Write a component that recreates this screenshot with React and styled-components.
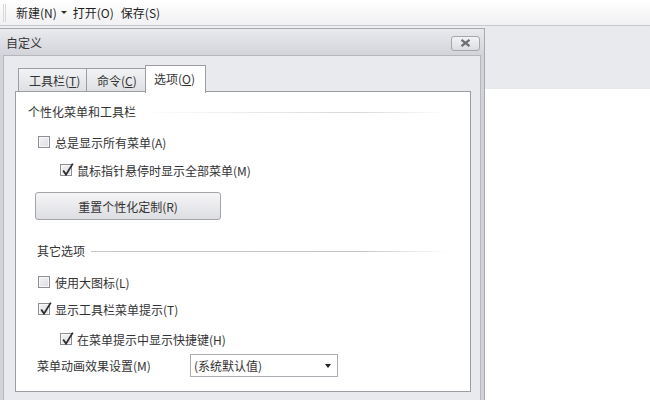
import styled, { createGlobalStyle } from 'styled-components'

const GlobalStyle = createGlobalStyle`
  html, body { margin: 0; padding: 0; background: #fff; }
  body {
    font-family: "Noto Sans CJK SC", "Microsoft YaHei", sans-serif;
    font-size: 12px;
    color: #2b2b2b;
    width: 650px;
    height: 400px;
    overflow: hidden;
  }
`

const Toolbar = styled.div`
  height: 26px;
  box-sizing: border-box;
  display: flex;
  align-items: center;
  padding-left: 3px;
  background: linear-gradient(#ffffff, #f1f1f3);
  border-bottom: 1px solid #c6c7cc;
`

const Grip = styled.div`
  width: 3px;
  height: 18px;
  border-left: 1px solid #d6d7db;
  border-right: 1px solid #d6d7db;
  box-sizing: border-box;
  margin-right: 10px;
`

const ToolItem = styled.span`
  display: inline-flex;
  align-items: center;
  margin-right: ${p => p.$gap || 6}px;
  color: #1f1f1f;
  line-height: 16px;
`

const DropArrow = styled.span`
  width: 0;
  height: 0;
  margin-left: 4px;
  border-left: 3px solid transparent;
  border-right: 3px solid transparent;
  border-top: 3px solid #333;
`

const Workspace = styled.div`
  display: flex;
  height: 374px;
`

const DialogColumn = styled.div`
  background: #eceef1;
  padding-top: 2px;
`

const Dialog = styled.div`
  width: 486px;
  height: 372px;
  box-sizing: border-box;
  margin-left: -1px;
  border: 1px solid #a8a9ae;
  border-bottom: none;
  background: #d2d3d8;
  display: flex;
  flex-direction: column;
`

const TitleBar = styled.div`
  height: 26px;
  flex: none;
  display: flex;
  align-items: center;
  justify-content: space-between;
  padding: 0 4px 0 6px;
  background: linear-gradient(#e9eaee, #d3d4d9);
  color: #353535;
`

const CloseButton = styled.div`
  width: 29px;
  height: 15px;
  box-sizing: border-box;
  border: 1px solid #a5a6ab;
  border-radius: 3px;
  background: linear-gradient(#f3f3f5, #dcdde1);
  display: flex;
  align-items: center;
  justify-content: center;
  margin-top: 2px;
`

const InnerFrame = styled.div`
  flex: 1;
  margin: 0 3px;
  border: 1px solid #b6b7bc;
  border-bottom: none;
  background: #e9eaee;
  padding: 9px 10px 0 11px;
  display: flex;
  flex-direction: column;
`

const TabStrip = styled.div`
  display: flex;
  align-items: flex-end;
  padding-left: 3px;
  height: 27px;
  position: relative;
  z-index: 1;
`

const Tab = styled.div`
  box-sizing: border-box;
  width: ${p => p.$w}px;
  height: ${p => (p.$active ? 28 : 24)}px;
  margin-left: ${p => (p.$first ? 0 : -1)}px;
  border: 1px solid #9c9da2;
  border-bottom: ${p => (p.$active ? 'none' : '1px solid #9c9da2')};
  background: ${p => (p.$active ? '#fff' : 'linear-gradient(#f2f3f5, #dfe0e4)')};
  display: flex;
  align-items: center;
  padding-left: ${p => (p.$active ? 8 : 10)}px;
  padding-bottom: ${p => (p.$active ? 3 : 0)}px;
  color: #333;
  margin-bottom: ${p => (p.$active ? -1 : 0)}px;

  u { text-decoration: underline; text-underline-offset: 1px; }
`

const Panel = styled.div`
  width: 456px;
  height: 301px;
  box-sizing: border-box;
  margin-top: -1px;
  border: 1px solid #9c9da2;
  background: #fff;
  padding: 11px 0 0 12px;
  display: flex;
  flex-direction: column;
`

const GroupHeader = styled.div`
  display: flex;
  align-items: center;
  gap: 6px;
  height: 16px;
  padding-left: ${p => p.$indent || 0}px;
  padding-right: 22px;
  margin-top: ${p => p.$top || 0}px;
  color: #333;

  &::after {
    content: '';
    flex: 1;
    height: 1px;
    margin-top: 2px;
    background: ${p => p.$faint
      ? 'linear-gradient(to right, rgba(200,200,200,0), #d8d8d8 70%, rgba(220,220,220,0))'
      : 'linear-gradient(to right, #c8c8c8, #c4c4c4 75%, rgba(220,220,220,0))'};
  }
`

const CheckRow = styled.label`
  display: flex;
  align-items: center;
  gap: 5px;
  height: 16px;
  margin-top: ${p => p.$top}px;
  padding-left: ${p => p.$indent}px;
  color: #333;
`

const Box = styled.span`
  position: relative;
  width: 12px;
  height: 12px;
  box-sizing: border-box;
  border: 1px solid #8d8e93;
  background: linear-gradient(135deg, #f4f4f6, #dcdde2);
  box-shadow: inset 0 0 0 1px #f8f8f9;
  flex: none;

  svg {
    position: absolute;
    left: 0;
    top: -3px;
  }
`

const ResetButton = styled.div`
  width: 186px;
  height: 28px;
  box-sizing: border-box;
  margin: 14px 0 0 7px;
  border: 1px solid #a3a4a9;
  border-radius: 3px;
  background: linear-gradient(#f5f5f7, #dddee2);
  display: flex;
  align-items: center;
  justify-content: center;
  color: #333;
`

const SelectRow = styled.div`
  display: flex;
  align-items: center;
  margin-top: 7px;
  padding-left: 9px;
  color: #333;
`

const SelectLabel = styled.span`
  width: 153px;
`

const Select = styled.div`
  width: 148px;
  height: 23px;
  box-sizing: border-box;
  border: 1px solid #abadb3;
  background: #fff;
  display: flex;
  align-items: center;
  justify-content: space-between;
  padding: 0 6px 0 3px;
`

const SelectArrow = styled.span`
  width: 0;
  height: 0;
  border-left: 3px solid transparent;
  border-right: 3px solid transparent;
  border-top: 4px solid #222;
`

const Filler = styled.div`
  flex: 1;
  display: flex;
  flex-direction: column;
  background: #fff;
`

const GrayBand = styled.div`
  height: 63px;
  background: #e9eaee;
`

const CloseIcon = () => (
  <svg width="11" height="8" viewBox="0 0 11 8">
    <path d="M1.5 0.8 L9.5 7.2 M9.5 0.8 L1.5 7.2" stroke="#6d6e73" strokeWidth="2.2" strokeLinecap="butt" />
  </svg>
)

const Check = ({ checked }) => (
  <Box>
    {checked && (
      <svg width="14" height="15" viewBox="0 0 14 15">
        <path d="M2.2 8.6 L5 12.6 L11.8 1.6" fill="none" stroke="#2d2d2d" strokeWidth="1.8" strokeLinejoin="miter" />
      </svg>
    )}
  </Box>
)

const Option = ({ checked, indent, top, children }) => (
  <CheckRow $indent={indent} $top={top}>
    <Check checked={checked} />
    <span>{children}</span>
  </CheckRow>
)

const App = () => {
  return (
    <>
      <GlobalStyle />
      <Toolbar>
        <Grip />
        <ToolItem $gap={6}>新建(N)<DropArrow /></ToolItem>
        <ToolItem $gap={7}>打开(O)</ToolItem>
        <ToolItem>保存(S)</ToolItem>
      </Toolbar>
      <Workspace>
        <DialogColumn>
          <Dialog>
            <TitleBar>
              <span>自定义</span>
              <CloseButton><CloseIcon /></CloseButton>
            </TitleBar>
            <InnerFrame>
              <TabStrip>
                <Tab $w={69} $first>工具栏(<u>T</u>)</Tab>
                <Tab $w={60}>命令(<u>C</u>)</Tab>
                <Tab $w={61} $active>选项(<u>O</u>)</Tab>
              </TabStrip>
              <Panel>
                <GroupHeader $faint>个性化菜单和工具栏</GroupHeader>
                <Option indent={10} top={15}>总是显示所有菜单(A)</Option>
                <Option indent={32} top={12} checked>鼠标指针悬停时显示全部菜单(M)</Option>
                <ResetButton>重置个性化定制(R)</ResetButton>
                <GroupHeader $indent={9} $top={22}>其它选项</GroupHeader>
                <Option indent={10} top={16}>使用大图标(L)</Option>
                <Option indent={10} top={11} checked>显示工具栏菜单提示(T)</Option>
                <Option indent={32} top={14} checked>在菜单提示中显示快捷键(H)</Option>
                <SelectRow>
                  <SelectLabel>菜单动画效果设置(M)</SelectLabel>
                  <Select>
                    <span>(系统默认值)</span>
                    <SelectArrow />
                  </Select>
                </SelectRow>
              </Panel>
            </InnerFrame>
          </Dialog>
        </DialogColumn>
        <Filler>
          <GrayBand />
        </Filler>
      </Workspace>
    </>
  )
}

export default App
